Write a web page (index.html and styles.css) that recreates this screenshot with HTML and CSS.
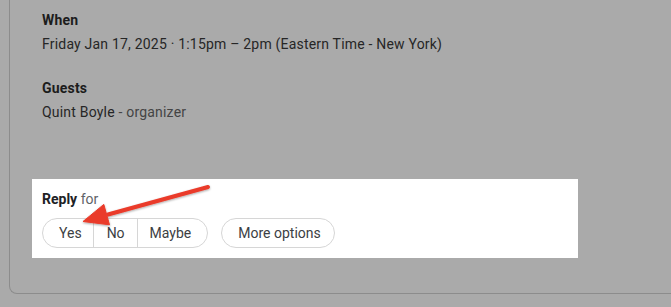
FILE: index.html
```html
<!DOCTYPE html>
<html lang="en">
<head>
  <meta charset="UTF-8">
  <title>Invitation</title>
  <link rel="stylesheet" href="styles.css">
</head>
<body>
  <div class="card">
    <!-- When -->
    <div class="section">
      <div class="label">When</div>
      <div class="value">Friday Jan 17, 2025 · 1:15pm – 2pm (Eastern Time - New York)</div>
    </div>

    <!-- Guests -->
    <div class="section">
      <div class="label">Guests</div>
      <div class="value">Quint Boyle <span class="muted">- organizer</span></div>
    </div>

    <!-- Reply -->
    <div class="reply">
      <div class="reply-title"><b>Reply</b> <span class="for">for</span></div>
      <div class="reply-buttons">
        <div class="btn-group">
          <button class="seg seg-first">Yes</button>
          <button class="seg">No</button>
          <button class="seg seg-last">Maybe</button>
        </div>
        <button class="btn">More options</button>
      </div>
    </div>
  </div>

  <!-- annotation arrow -->
  <svg class="arrow" width="671" height="307" viewBox="0 0 671 307">
    <defs>
      <filter id="shadow" x="-20%" y="-20%" width="140%" height="160%">
        <feDropShadow dx="0" dy="1" stdDeviation="1" flood-color="#000" flood-opacity="0.35"/>
      </filter>
    </defs>
    <g filter="url(#shadow)" fill="#ea3b2a" stroke="#ea3b2a">
      <line x1="208" y1="187" x2="108" y2="214.5" stroke-width="4" stroke-linecap="round"/>
      <polygon points="83,221.5 109.5,224.8 103.8,204.4" stroke-width="1" stroke-linejoin="round"/>
    </g>
  </svg>
</body>
</html>
```

FILE: styles.css
```css
body {
  margin: 0;
  background: #aaaaaa;
  font-family: Roboto, Arial, sans-serif;
  font-size: 14px;
  line-height: 20px;
  color: #2a2a2a;
  height: 307px;
  overflow: hidden;
}
.card {
  margin-left: 9px;
  height: 294px;
  box-sizing: border-box;
  padding: 10px 0 0 32px;
  border-left: 1px solid #8c8c8c;
  border-bottom: 1px solid #8c8c8c;
  border-bottom-left-radius: 8px;
}
.section {
  display: flex;
  flex-direction: column;
  gap: 4px;
  margin-bottom: 24px;
  letter-spacing: 0.2px;
}
.label {
  font-weight: bold;
  color: #1c1c1c;
}
.value {
  color: #262626;
}
.muted {
  color: #444;
}
.reply {
  margin: 57px 0 0 -10px;
  width: 546px;
  box-sizing: border-box;
  padding: 10px;
  background: #fff;
}
.reply-title {
  color: #202124;
  margin-bottom: 9px;
}
.reply-title b {
  font-weight: bold;
}
.for {
  color: #5f6368;
}
.reply-buttons {
  display: flex;
  gap: 13px;
}
.btn-group {
  display: flex;
  height: 30px;
  box-sizing: border-box;
  border: 1px solid #d6d6d6;
  border-radius: 15px;
  overflow: hidden;
}
.seg {
  font: inherit;
  color: #3c4043;
  background: none;
  border: none;
  border-left: 1px solid #d6d6d6;
  padding: 0 12px 0 13px;
  height: 28px;
}
.seg-first {
  border-left: none;
  padding: 0 11px 0 16px;
}
.seg-last {
  padding: 0 16px 0 12px;
}
.btn {
  font: inherit;
  color: #3c4043;
  background: #fff;
  height: 30px;
  border: 1px solid #d6d6d6;
  border-radius: 15px;
  padding: 0 13px 0 16px;
}
.arrow {
  position: absolute;
  left: 0;
  top: 0;
  pointer-events: none;
}
```
